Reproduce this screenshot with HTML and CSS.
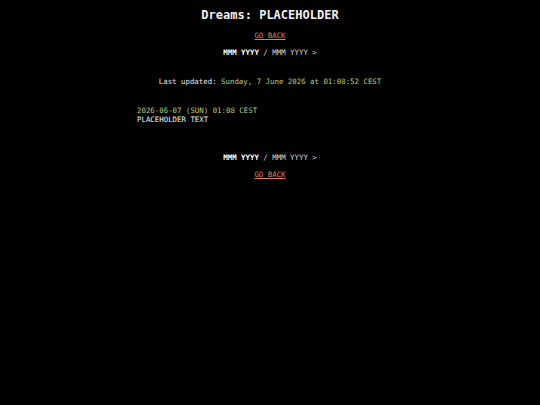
FILE: index.html
```html
<!DOCTYPE html>
<html lang="en">
<head>
<meta charset="utf-8">
<title>Dreams: PLACEHOLDER</title>
<link rel="stylesheet" href="styles.css">
</head>
<body>
<main class="page">
  <h1 class="title">Dreams: PLACEHOLDER</h1>
  <p class="back"><a href="#">GO BACK</a></p>
  <p class="nav"><span class="cur">MMM YYYY</span> / <a href="#" class="next">MMM YYYY &gt;</a></p>
  <p class="updated">Last updated: <span class="green">Sunday, 7 June 2026 at 01:08:52 CEST</span></p>
  <section class="entry">
    <div class="green">2026-06-07 (SUN) 01:08 CEST</div>
    <div>PLACEHOLDER TEXT</div>
  </section>
  <p class="nav nav-bottom"><span class="cur">MMM YYYY</span> / <a href="#" class="next">MMM YYYY &gt;</a></p>
  <p class="back back-bottom"><a href="#">GO BACK</a></p>
</main>
</body>
</html>
```
FILE: styles.css
```css
html, body {
  margin: 0;
  padding: 0;
  background: #000;
}
body {
  color: #e6e6e6;
  font-family: "DejaVu Sans Mono", "Liberation Mono", monospace;
  font-size: 7.4px;
  line-height: 9px;
}
.page {
  display: flex;
  flex-direction: column;
  align-items: center;
  padding-top: 8px;
}
.title {
  margin: 0;
  font-size: 12px;
  line-height: 14px;
  font-weight: bold;
  color: #f0f0f0;
}
p { margin: 0; }
a { color: #d9805e; }
.back { margin-top: 8.5px; }
.nav { margin-top: 8px; color: #dcdcdc; }
.cur { font-weight: bold; color: #fff; }
.nav .next { color: #dcdcdc; text-decoration: none; }
.updated { margin-top: 20.5px; }
.green { color: #b8cf7c; }
.entry {
  margin-top: 20px;
  width: 266px;
  text-align: left;
  color: #f0f0f0;
}
.nav-bottom { margin-top: 29px; }
.back-bottom { margin-top: 8px; }
```
